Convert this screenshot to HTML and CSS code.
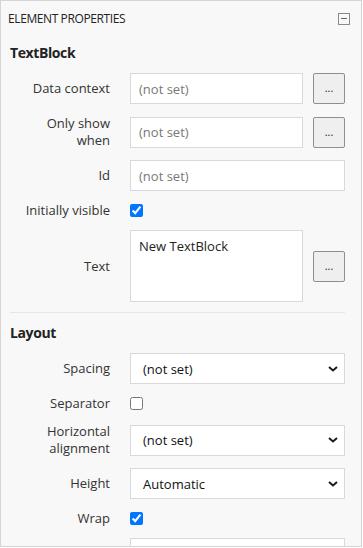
FILE: index.html
```html
<!DOCTYPE html>
<html>
<head>
<meta charset="utf-8">
<link rel="stylesheet" href="styles.css">
</head>
<body>
<div class="panel">
  <div class="panel-header">
    <span class="title">ELEMENT PROPERTIES</span>
    <span class="collapse"><span class="minus"></span></span>
  </div>
  <div class="section">
    <div class="heading">TextBlock</div>
    <div class="rows">
      <div class="label">Data context</div>
      <div class="ctrl"><div class="input placeholder">(not set)</div><div class="btn">...</div></div>

      <div class="label">Only show<br>when</div>
      <div class="ctrl"><div class="input placeholder">(not set)</div><div class="btn">...</div></div>

      <div class="label">Id</div>
      <div class="ctrl"><div class="input placeholder">(not set)</div></div>

      <div class="label">Initially visible</div>
      <div class="ctrl"><input class="check" type="checkbox" checked></div>

      <div class="label">Text</div>
      <div class="ctrl"><div class="input textarea">New TextBlock</div><div class="btn">...</div></div>
    </div>
  </div>
  <div class="divider"></div>
  <div class="section">
    <div class="heading heading-second">Layout</div>
    <div class="rows">
      <div class="label">Spacing</div>
      <div class="ctrl"><div class="select"><span>(not set)</span><svg class="chev" width="10" height="6" viewBox="0 0 10 6"><path d="M1 1 L5 4.5 L9 1" fill="none" stroke="#1a1a1a" stroke-width="2"/></svg></div></div>

      <div class="label">Separator</div>
      <div class="ctrl"><input class="check" type="checkbox"></div>

      <div class="label">Horizontal<br>alignment</div>
      <div class="ctrl"><div class="select"><span>(not set)</span><svg class="chev" width="10" height="6" viewBox="0 0 10 6"><path d="M1 1 L5 4.5 L9 1" fill="none" stroke="#1a1a1a" stroke-width="2"/></svg></div></div>

      <div class="label">Height</div>
      <div class="ctrl"><div class="select"><span>Automatic</span><svg class="chev" width="10" height="6" viewBox="0 0 10 6"><path d="M1 1 L5 4.5 L9 1" fill="none" stroke="#1a1a1a" stroke-width="2"/></svg></div></div>

      <div class="label">Wrap</div>
      <div class="ctrl"><input class="check" type="checkbox" checked></div>

      <div class="label"></div>
      <div class="ctrl"><div class="input"></div></div>
    </div>
  </div>
</div>
</body>
</html>
```
FILE: styles.css
```css
html, body {
  margin: 0;
  padding: 0;
  background: #ffffff;
}
body {
  font-family: "Open Sans", "Noto Sans", sans-serif;
  font-size: 13px;
  color: #333;
}
.panel {
  width: 362px;
  height: 547px;
  box-sizing: border-box;
  border: 1px solid #d4d4d4;
  background: #f8f8f8;
  overflow: hidden;
  padding: 0 16px 0 9px;
}
.panel-header {
  height: 35px;
  display: flex;
  align-items: center;
  justify-content: space-between;
  margin-left: -2px;
  margin-right: -5px;
}
.title {
  font-size: 12px;
  letter-spacing: -0.4px;
  color: #222;
}
.collapse {
  width: 10px;
  height: 10px;
  border: 1px solid #8a8a8a;
  display: flex;
  align-items: center;
  justify-content: center;
}
.minus {
  width: 6px;
  height: 1px;
  background: #666;
}
.heading {
  font-weight: 700;
  font-size: 14px;
  letter-spacing: -0.4px;
  line-height: 20px;
  color: #222;
  margin: 7px 0 10px;
}
.heading-second {
  margin-top: 10px;
}
.rows {
  display: grid;
  grid-template-columns: 100px 1fr;
  column-gap: 20px;
  row-gap: 11px;
  align-items: center;
}
.label {
  text-align: right;
  line-height: 17px;
  color: #333;
}
.ctrl {
  display: flex;
  align-items: center;
  gap: 10px;
}
.input {
  flex: 1;
  height: 31px;
  box-sizing: border-box;
  border: 1px solid #d9d9d9;
  background: #fff;
  padding: 0 8px;
  display: flex;
  align-items: center;
  color: #222;
}
.placeholder {
  color: #777;
}
.textarea {
  height: 72px;
  align-items: flex-start;
  padding-top: 6px;
  color: #222;
}
.btn {
  width: 32px;
  height: 31px;
  box-sizing: border-box;
  border: 1px solid #8f8f8f;
  border-radius: 2px;
  background: #efefef;
  display: flex;
  align-items: center;
  justify-content: center;
  font-size: 11px;
  color: #222;
  padding-bottom: 2px;
}
.select {
  flex: 1;
  height: 31px;
  box-sizing: border-box;
  border: 1px solid #d9d9d9;
  background: #fff;
  padding: 0 6px 0 12px;
  display: flex;
  align-items: center;
  justify-content: space-between;
  color: #111;
}
.check {
  width: 13px;
  height: 13px;
  margin: 0;
  accent-color: #0075ff;
}
.divider {
  height: 1px;
  background: #e6e6e6;
  margin-top: 10px;
}
```
